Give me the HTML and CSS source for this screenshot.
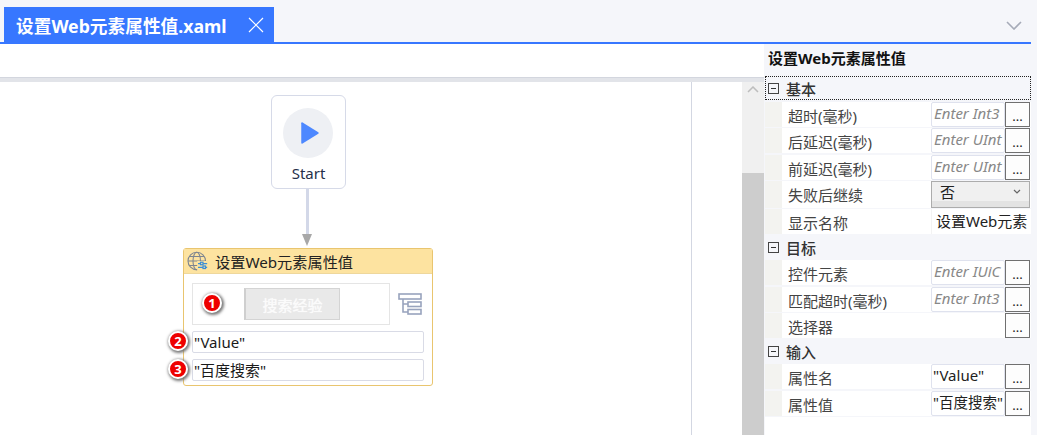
FILE: index.html
```html
<!DOCTYPE html>
<html>
<head>
    <title>设置Web元素属性值</title>
    <meta charset="utf-8">
    <link rel="stylesheet" href="styles.css">
</head>
<body>
    <div class="tabbar">
        <div class="tab">
            <span class="tab-title">设置Web元素属性值.xaml</span>
            <svg class="tab-close" width="16" height="16" viewBox="0 0 16 16"><path d="M1 1L15 15M15 1L1 15" stroke="#fff" stroke-width="1.2" fill="none"/></svg>
        </div>
        <svg class="tab-more" width="16" height="9" viewBox="0 0 16 9"><path d="M1 1L8 8L15 1" stroke="#a6abb8" stroke-width="1.6" fill="none"/></svg>
    </div>
    <div class="main">
        <div class="designer">
            <div class="toolbar"></div>
            <div class="strip"></div>
            <div class="work">
                <div class="canvas">
                    <div class="start">
                        <div class="start-circle">
                            <svg width="20" height="24" viewBox="0 0 20 26"><path d="M2 1.500L19 12.200Q20 13 19 13.800L2 24.500Q0.500 25 0.500 23.500V2.500Q0.500 1 2 1.500Z" fill="#4d88ff"/></svg>
                        </div>
                        <div class="start-label">Start</div>
                    </div>
                    <div class="link"></div>
                    <div class="link-head"></div>
                    <div class="activity">
                        <div class="activity-head">
                            <svg width="22" height="20" viewBox="0 0 26 24">
                                <g fill="none" stroke="#7d8590" stroke-width="1.300">
                                    <circle cx="11.500" cy="12" r="10.500"/>
                                    <ellipse cx="11.500" cy="12" rx="4.500" ry="10.500"/>
                                    <path d="M1 12H22M2.500 6.500H20.500M2.500 17.500H14"/>
                                </g>
                                <rect x="12" y="12" width="14" height="12" fill="#fde3a0"/>
                                <g fill="none" stroke="#3d8fd6" stroke-width="1.500">
                                    <path d="M13 15H24M13 19.500H24"/>
                                    <rect x="16" y="13.500" width="3" height="3" fill="#fde3a0"/>
                                    <rect x="19" y="18" width="3" height="3" fill="#fde3a0"/>
                                </g>
                            </svg>
                            <span>设置Web元素属性值</span>
                        </div>
                        <div class="activity-body">
                            <div class="target-row">
                                <div class="target">
                                    <div class="target-shot"><span>搜索经验</span></div>
                                </div>
                                <svg class="tree" width="24" height="23" viewBox="0 0 24 23">
                                    <g fill="none" stroke="#98a3bd" stroke-width="1.600">
                                        <rect x="1" y="1" width="22" height="5"/>
                                        <rect x="10" y="9" width="13" height="4.500"/>
                                        <rect x="10" y="16.500" width="13" height="4.500"/>
                                        <path d="M5 6V19H10M5 11H10"/>
                                    </g>
                                </svg>
                            </div>
                            <div class="arg">"Value"</div>
                            <div class="arg">"百度搜索"</div>
                        </div>
                        <span class="badge badge-one">1</span>
                        <span class="badge badge-two">2</span>
                        <span class="badge badge-three">3</span>
                    </div>
                </div>
                <div class="blank"></div>
                <div class="scrollbar">
                    <svg class="scroll-up" width="12" height="7" viewBox="0 0 12 7"><path d="M1 6L6 1L11 6" stroke="#bdbdbd" stroke-width="1.500" fill="none"/></svg>
                    <div class="scroll-thumb"></div>
                </div>
            </div>
        </div>
        <div class="props">
            <div class="props-title">设置Web元素属性值</div>
            <div class="group group-first"><span class="minus"></span>基本</div>
            <div class="prop"><div class="prop-name">超时(毫秒)</div><div class="prop-input hint">Enter Int3</div><div class="dots">...</div></div>
            <div class="prop"><div class="prop-name">后延迟(毫秒)</div><div class="prop-input hint">Enter UInt</div><div class="dots">...</div></div>
            <div class="prop"><div class="prop-name">前延迟(毫秒)</div><div class="prop-input hint">Enter UInt</div><div class="dots">...</div></div>
            <div class="prop prop-tall"><div class="prop-name">失败后继续</div>
                <div class="combo">否<svg width="8" height="5" viewBox="0 0 8 5"><path d="M1 1L4 4L7 1" stroke="#666" stroke-width="1.200" fill="none"/></svg></div>
            </div>
            <div class="prop"><div class="prop-name">显示名称</div><div class="prop-text">设置Web元素</div></div>
            <div class="group"><span class="minus"></span>目标</div>
            <div class="prop"><div class="prop-name">控件元素</div><div class="prop-input hint">Enter IUiC</div><div class="dots">...</div></div>
            <div class="prop"><div class="prop-name">匹配超时(毫秒)</div><div class="prop-input hint">Enter Int3</div><div class="dots">...</div></div>
            <div class="prop"><div class="prop-name">选择器</div><div class="prop-empty"></div><div class="dots">...</div></div>
            <div class="group"><span class="minus"></span>输入</div>
            <div class="prop"><div class="prop-name">属性名</div><div class="prop-input">"Value"</div><div class="dots">...</div></div>
            <div class="prop"><div class="prop-name">属性值</div><div class="prop-input prop-input-cjk">"百度搜索"</div><div class="dots">...</div></div>
            <div class="props-end"></div>
        </div>
    </div>
</body>
</html>
```
FILE: styles.css
```css
html, body {
    margin: 0;
    height: 100%;
    overflow: hidden;
    background: #f5f6fa;
    font-family: "Noto Sans", "Noto Sans CJK SC", sans-serif;
    font-size: 15px;
    color: #222;
}

.tabbar {
    display: flex;
    align-items: flex-end;
    justify-content: space-between;
    height: 42px;
    padding: 0 15px 0 4px;
}

.tab {
    display: flex;
    align-items: center;
    justify-content: space-between;
    box-sizing: border-box;
    width: 270px;
    height: 35px;
    padding: 0 10px 0 12px;
    background: #3777ff;
}
.tab-title {
    color: #fff;
    font-size: 17.700px;
    font-weight: 700;
    white-space: nowrap;
}
.tab-more {
    margin-bottom: 12px;
}

.main {
    display: flex;
    width: 1031px;
    height: 391px;
    border-top: 2px solid #3777ff;
}

.designer {
    display: flex;
    flex-direction: column;
    width: 764px;
    background: #fff;
}
.toolbar {
    height: 33px;
}
.strip {
    height: 5px;
    box-sizing: border-box;
    background: #e2e4e9;
    border-top: 1px solid #d3d6de;
}
.work {
    display: flex;
    flex: 1;
    min-height: 0;
}
.canvas {
    position: relative;
    width: 691px;
    border-right: 1px solid #d3d7e2;
}
.blank {
    width: 50px;
}
.scrollbar {
    position: relative;
    display: flex;
    flex-direction: column;
    justify-content: flex-end;
    width: 22px;
    background: #f0f0f0;
}
.scroll-up {
    position: absolute;
    top: 4px;
    left: 5px;
}
.scroll-thumb {
    height: 262px;
    background: #cdcdcd;
}

/* diagram nodes, canvas starts at y=82 */
.start {
    position: absolute;
    left: 271px;
    top: 13px;
    box-sizing: border-box;
    width: 75px;
    height: 94px;
    display: flex;
    flex-direction: column;
    align-items: center;
    padding-top: 12px;
    background: #fff;
    border: 1px solid #d6dae8;
    border-radius: 6px;
}
.start-circle {
    display: flex;
    align-items: center;
    justify-content: center;
    width: 50px;
    height: 50px;
    margin-right: 2px;
    padding-left: 4px;
    box-sizing: border-box;
    background: #eef0f4;
    border-radius: 50%;
}
.start-label {
    margin-top: 5px;
    font-size: 15px;
    line-height: 20px;
    color: #26304a;
}
.link {
    position: absolute;
    left: 306px;
    top: 107px;
    width: 3px;
    height: 46px;
    background: #d3d8e8;
}
.link-head {
    position: absolute;
    left: 302px;
    top: 152px;
    border-left: 5.500px solid transparent;
    border-right: 5.500px solid transparent;
    border-top: 12px solid #a8a8a8;
}

.activity {
    position: absolute;
    left: 183px;
    top: 166px;
    box-sizing: border-box;
    width: 250px;
    height: 138px;
    background: #fff;
    border: 1px solid #e9c56f;
    border-radius: 3px;
}
.activity-head {
    display: flex;
    align-items: center;
    gap: 6px;
    height: 24px;
    padding-left: 3px;
    background: #fde3a0;
    border-bottom: 1px solid #eed79c;
    font-size: 15.200px;
    color: #222;
}
.activity-body {
    padding: 9px 8px 0;
}
.target-row {
    display: flex;
    align-items: center;
    gap: 8px;
    margin-bottom: 6px;
}
.target {
    box-sizing: border-box;
    display: flex;
    align-items: center;
    width: 198px;
    height: 42px;
    padding-left: 51px;
    border: 1px solid #e5e5e5;
}
.target-shot {
    box-sizing: border-box;
    width: 96px;
    height: 32px;
    display: flex;
    align-items: center;
    justify-content: center;
    background: #e9e9e9;
    border: 1px solid #d4d4d4;
    border-left: 2px solid #cfcfcf;
    color: #fbfbfb;
    font-size: 15px;
    text-shadow: 0 0 1px #fff;
}
.arg {
    box-sizing: border-box;
    width: 232px;
    height: 22px;
    margin-bottom: 6px;
    padding-left: 1px;
    line-height: 20px;
    border: 1px solid #d9dbe6;
    border-radius: 2px;
    font-size: 15px;
    color: #1a1a1a;
}
.badge {
    position: absolute;
    display: flex;
    align-items: center;
    justify-content: center;
    box-sizing: border-box;
    width: 20px;
    height: 20px;
    background: #ee0000;
    border: 2px solid #fff;
    border-radius: 50%;
    box-shadow: 1px 1px 3px 1px #777;
    color: #fff;
    font-size: 13px;
    font-weight: 700;
    line-height: 1;
}
.badge-one {
    left: 18px;
    top: 44px;
}
.badge-two {
    left: -16px;
    top: 82px;
}
.badge-three {
    left: -16px;
    top: 110px;
}

/* property grid */
.props {
    box-sizing: border-box;
    width: 267px;
    padding-left: 1px;
    background: #f5f6fa;
}
.props-title {
    height: 32px;
    padding: 2px 0 0 3px;
    box-sizing: border-box;
    line-height: 24px;
    font-size: 15px;
    font-weight: 700;
    color: #111;
}
.group {
    display: flex;
    align-items: center;
    box-sizing: border-box;
    height: 25px;
    padding-left: 3px;
    font-size: 15px;
    font-weight: 500;
    color: #333;
}
.group-first {
    height: 24px;
    margin-bottom: 2px;
    padding-top: 1px;
    outline: 1px dotted #222;
    outline-offset: -1px;
}
.minus {
    position: relative;
    box-sizing: border-box;
    width: 11px;
    height: 11px;
    margin-right: 7px;
    border: 1px solid #444;
}
.minus::after {
    content: "";
    position: absolute;
    left: 2px;
    top: 4px;
    width: 5px;
    height: 1px;
    background: #333;
}
.prop {
    display: flex;
    height: 25px;
    margin-bottom: 1.300px;
    margin-left: 17px;
    background: #fff;
    box-shadow: -17px 0 0 #f3f3f0;
}
.prop-tall {
    height: 27px;
}
.prop-name {
    width: 149px;
    padding-left: 6px;
    box-sizing: border-box;
    line-height: 29px;
    font-size: 15px;
    color: #444;
}
.prop-input {
    box-sizing: border-box;
    width: 74px;
    padding-left: 1px;
    overflow: hidden;
    white-space: nowrap;
    line-height: 21px;
    border: 1px solid #dfe2ee;
    border-radius: 2px;
    font-size: 15px;
    color: #222;
}
.prop-input-cjk {
    font-size: 14.500px;
}
.hint {
    padding-left: 2px;
    font-style: italic;
    color: #888;
}
.prop-empty {
    width: 74px;
}
.prop-text {
    padding-left: 4px;
    line-height: 24px;
    white-space: nowrap;
    overflow: hidden;
    font-size: 15px;
    border-left: 1px solid #f3f3f3;
}
.dots {
    box-sizing: border-box;
    width: 25px;
    text-align: center;
    line-height: 26px;
    background: #fdfdfd;
    border: 1px solid #707070;
    color: #222;
    font-size: 13px;
}
.combo {
    display: flex;
    align-items: center;
    justify-content: space-between;
    box-sizing: border-box;
    width: 99px;
    height: 27px;
    padding: 0 8px 6px 8px;
    background: linear-gradient(#f0f0f0 78%, #e3e3e3 78%);
    border: 1px solid #acacac;
    font-size: 15px;
}
.props-end {
    height: 18px;
    background: #fff;
}
```
